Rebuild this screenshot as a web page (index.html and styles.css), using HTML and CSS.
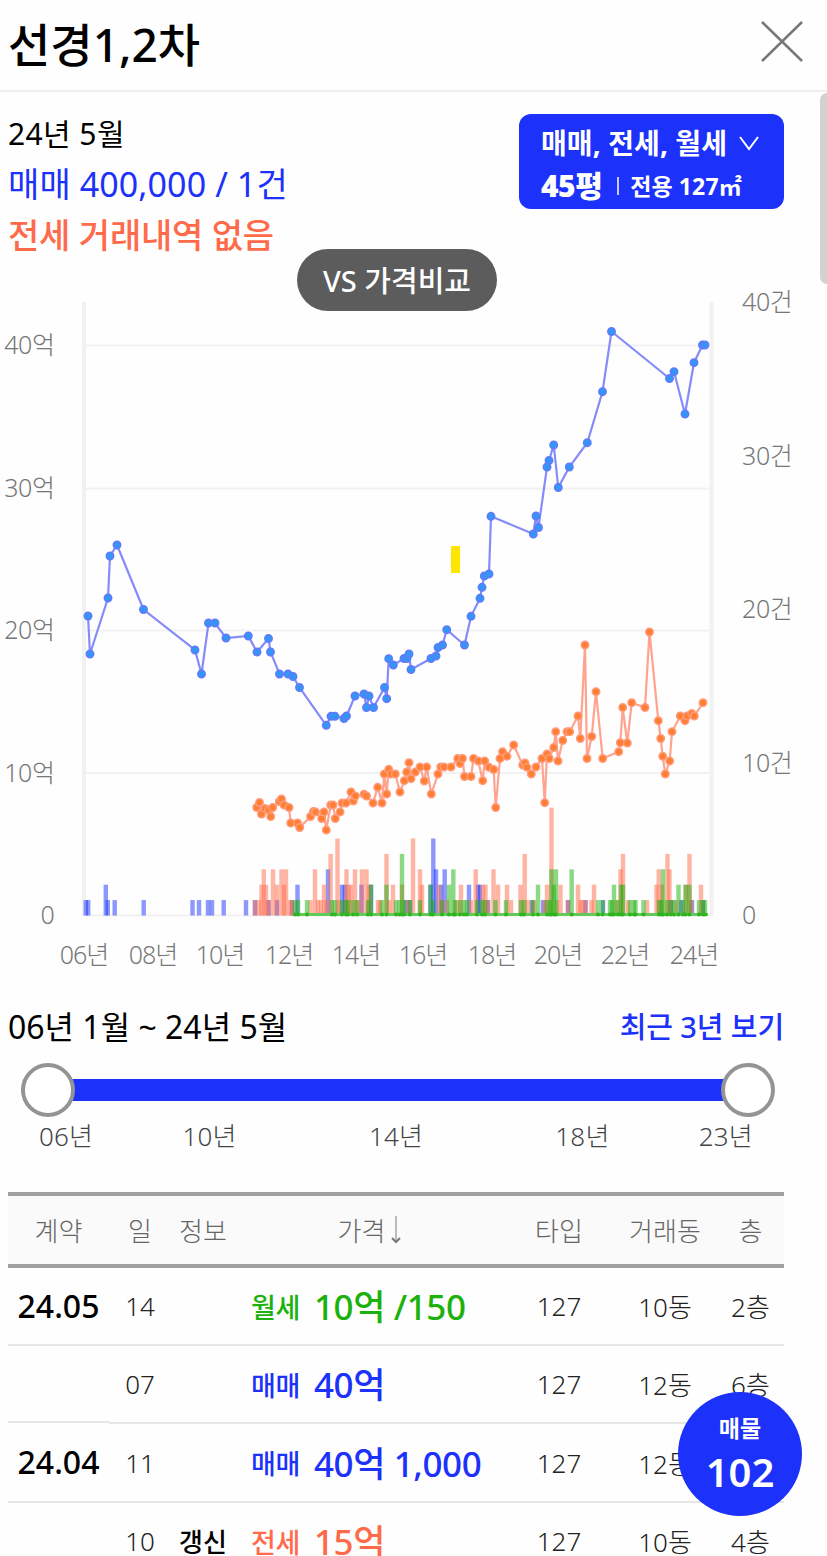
FILE: index.html
```html
<!DOCTYPE html>
<html lang="ko">
<head>
    <meta charset="UTF-8">
    <meta name="viewport" content="width=device-width, initial-scale=1.0">
    <title>선경1,2차</title>
    <link rel="stylesheet" href="styles.css">
</head>
<body>
    <header>
        <h1>선경1,2차</h1>
        <button class="btn-close" aria-label="닫기">
            <svg width="42" height="42" viewBox="0 0 42 42"><path d="M1 1L41 40M41 1L1 40"/></svg>
        </button>
    </header>
    <main>
        <section class="summary">
            <div class="summary-text">
                <p class="month">24년 5월</p>
                <p class="sale">매매 400,000 / 1건</p>
                <p class="lease">전세 거래내역 없음</p>
            </div>
            <button class="btn-filter">
                <span class="filter-type">매매, 전세, 월세
                    <svg width="20" height="15" viewBox="0 0 20 15"><path d="M1 1L10 13L19 1"/></svg>
                </span>
                <span class="filter-size"><b>45평</b><i></i><em>전용 127㎡</em></span>
            </button>
            <button class="btn-compare">VS 가격비교</button>
        </section>

        <svg class="chart" id="chart" width="827" height="710" viewBox="0 280 827 710"></svg>

        <section class="range">
            <div class="range-title">
                <span>06년 1월 ~ 24년 5월</span>
                <a class="recent">최근 3년 보기</a>
            </div>
            <div class="slider">
                <span class="thumb"></span>
                <span class="track"></span>
                <span class="thumb"></span>
            </div>
            <div class="range-years">
                <span>06년</span><span>10년</span><span>14년</span><span>18년</span><span>23년</span>
            </div>
        </section>

        <section class="deals">
            <div class="row head">
                <div>계약</div><div>일</div><div>정보</div>
                <div class="price-head">가격<svg width="12" height="30" viewBox="0 0 12 30"><path class="stem" d="M6 1V26"/><path d="M2 23L6 27L10 23"/></svg></div>
                <div>타입</div><div>거래동</div><div>층</div>
            </div>
            <div class="row">
                <div class="date">24.05</div><div>14</div><div></div>
                <div class="price rent"><small>월세</small>10억 /150</div>
                <div>127</div><div>10동</div><div>2층</div>
            </div>
            <div class="row">
                <div class="date short"></div><div>07</div><div></div>
                <div class="price sale"><small>매매</small>40억</div>
                <div>127</div><div>12동</div><div>6층</div>
            </div>
            <div class="row">
                <div class="date tall">24.04</div><div>11</div><div></div>
                <div class="price sale"><small>매매</small>40억 1,000</div>
                <div>127</div><div>12동</div><div></div>
            </div>
            <div class="row last">
                <div class="date"></div><div>10</div><div class="info">갱신</div>
                <div class="price lease"><small>전세</small>15억</div>
                <div>127</div><div>10동</div><div>4층</div>
            </div>
        </section>
    </main>
    <div class="scroll-thumb"></div>
    <button class="btn-listing"><span>매물</span><strong>102</strong></button>

    <script>
        const BASE = 915.5;   // 0억 / 0건
        const UNIT = 15.4;    // 1건 높이

        // 매매 가격
        const sale = "88,616 90,654 108,598 110,556 117,545 143.5,609.5 195,650 201.5,674 208.5,623 215,623 226,638 248.3,636 257,652 268.5,638.5 270.5,652 279.5,674 288,674 293,676.5 299.5,687.5 326.3,725.3 331,716.3 335,716.3 344,718.5 346.5,716 355,696 364,694 366.5,707.5 369,696 373.5,707.5 384.5,687.5 386.7,698.7 388.7,658.7 393.3,665 404,658.5 407,658.5 409,654 411,669.5 431,658.5 436,656 438,647.5 442.5,645 446.7,629.7 464.5,645 471,616.3 480,598.3 482,587.3 484.3,576 489,574 491,516.3 533.3,534 536,516 538.5,527.5 547,467 549,460.5 553.7,445 558.3,487.5 569.3,467 587.3,442.7 602.5,391.7 611.5,331.5 669.5,378.5 674,371.7 685,414 694,362.7 702.5,345 705,345";

        // 전세 가격
        const lease = "256.7,807.5 259.5,802.5 261.5,814 265,808.5 268.5,810 270.7,816.5 272.7,807.5 279.3,801.5 281.5,799 284,805 289,807.5 290.7,823 297.5,823 299.7,827.5 310.5,816.5 313.5,811.5 315.5,812 321.7,818.5 324,812 326.3,830 330.7,805 333,805 335.3,818.5 340,812 342,803 346,803 351,792 353.3,801 355.3,796 364,794.3 366.5,796 373,803 377.7,787.3 382,803 384.3,774 386.7,794 388.7,769.3 391,774 395.3,774 400,792 404.3,780.7 406.7,772 409,762.7 411,778.7 415.3,772 420,767 424.3,781 426.7,767 431.3,794 438,774 440.7,767 444,767 451,767 457.7,758.5 460,763.5 462.5,758.5 464.5,776.5 471,776.5 473.5,758.5 478.3,761 482.7,780.7 484.7,761 489,767.3 493.7,769.5 495.7,807.5 500,758.5 502.5,751.7 507,756.3 513.7,745 522.7,765 525,763 527,767.3 531.3,774 536,767 542,758.5 544.7,802.7 547,754 549.3,758.5 553.7,747.5 555.7,731.7 558,761 562.7,740.5 567,731.7 569.7,731.7 578,716 580.3,738.5 585,645 587,758.5 591.7,736.5 596,691.7 602.7,758.5 618.7,751.7 620.3,742.7 622.7,707.5 627.3,743 631.7,702.7 645,707.5 649.5,632 658.3,720.7 660.7,738.5 662.7,756.3 665.3,774 669.7,761 672,731.7 680.3,716 685,720.7 687,716 691.7,713.5 694.3,716 703,702.7";

        // 거래 건수 [위치, 건수]
        const bars = {
            sale: [[85.8,1],[88.2,1],[105.8,2],[107.8,1],[114.7,1],[143.7,1],[192.5,1],[199,1],[208,1],[212,1],[223.7,1],[246,1],[255,1],[268.5,1],[277,1],[292,1],[297.5,2],[328,3],[342,2],[345,2],[361.5,2],[371,2],[406,1],[410,1],[430.5,2],[433.3,5],[436,3],[441,2],[444.7,3],[469,2],[478,2],[480,2],[488,1],[532,1],[543,1],[568,1],[585.5,1],[603,1],[671,1],[681,1],[692,1],[703,1]],
            lease: [[255,1],[259,1],[261.5,2],[263.8,3],[266,2],[268.7,1],[273,3],[277,2],[281.5,3],[284,2],[286,3],[290,1],[292,1],[310.5,1],[315,3],[318,1],[321,1],[324,2],[326.3,1],[330.6,4],[337.5,5],[339,1],[346.5,3],[348.8,2],[351,2],[355,3],[358,1],[362,3],[366.5,3],[369,2],[378,1],[380,1],[386.5,4],[389,1],[393,2],[402,2],[408,1],[413,5],[420,3],[422,2],[439,2],[442,1],[447,1],[457,1],[461,2],[471,1],[475.7,3],[483,2],[485.5,2],[488,1],[493.5,3],[498,2],[507,2],[511,1],[520.5,2],[524.7,4],[528,1],[534,1],[545,1],[547,2],[551.5,7],[557,1],[560.5,2],[568,1],[578,2],[580.5,1],[582.5,1],[585.5,1],[591.5,1],[594,2],[616,1],[620.5,3],[623,4],[628,1],[647,1],[656.5,2],[658.7,3],[662,2],[667.5,4],[669.5,3],[676,1],[686,2],[689.5,4],[691,1],[701,2]],
            rent: [[295,1],[298,1],[307,1],[332,1],[335,1],[342,1],[346,1],[348,1],[353,1],[357,1],[368,1],[371,2],[382,1],[386.5,2],[396,1],[399.5,1],[402,4],[404,1],[410,1],[420,1],[430.5,2],[433,1],[442,1],[449,2],[453.3,3],[455,1],[460,1],[464,1],[467,1],[477,1],[482,1],[485,1],[495.5,1],[506,1],[521,1],[524,1],[533,1],[538,2],[547,1],[550,1],[551.5,3],[554,2],[556,3],[571.7,3],[598,1],[602.5,1],[610,1],[612,1],[614,2],[618,1],[621,2],[623,2],[630,1],[634,1],[635.5,1],[643.5,1],[659,1],[661.5,1],[663,3],[667,1],[671,1],[674,1],[678.5,2],[683,1],[685.5,2],[689.5,2],[699,1],[703,1],[705,1]]
        };

        let svg = "";

        // 축과 눈금선
        [345.5, 488.5, 630.5, 773, BASE].forEach((y, i) => {
            svg += `<line class="grid" x1="86" x2="709" y1="${y}" y2="${y}"/>`;
            const label = i === 4 ? "0" : `${40 - i * 10}억`;
            svg += `<text class="label label-y" x="54.5" y="${y + 8.5}" text-anchor="end">${label}</text>`;
        });
        svg += `<path class="axis" d="M84 302V916M711.5 302V916"/>`;
        [302, 456, 609, 763, BASE].forEach((y, i) => {
            const label = i === 4 ? "0" : `${40 - i * 10}건`;
            svg += `<text class="label label-y" x="742" y="${y + 8.5}">${label}</text>`;
        });
        [84, 153, 220, 289, 356, 423, 492, 558, 625, 694].forEach((x, i) => {
            const year = String(6 + i * 2).padStart(2, "0");
            svg += `<text class="label" x="${x}" y="964" text-anchor="middle">${year}년</text>`;
        });

        // 막대
        ["sale", "lease", "rent"].forEach(kind => {
            bars[kind].forEach(([x, n]) => {
                svg += `<rect class="bar-${kind}" x="${x - 2.2}" y="${BASE - n * UNIT}" width="4.4" height="${n * UNIT}"/>`;
            });
        });
        svg += `<path class="rent-line" d="M294 914.5H708"/>`;
        bars.rent.forEach(([x]) => {
            svg += `<circle class="dot-rent" cx="${x}" cy="914.5" r="2"/>`;
        });

        // 가격 선
        [["lease", lease], ["sale", sale]].forEach(([kind, points]) => {
            svg += `<polyline class="line-${kind}" points="${points}"/>`;
            points.split(" ").forEach(p => {
                const [x, y] = p.split(",");
                svg += `<circle class="dot-${kind}" cx="${x}" cy="${y}" r="3.7"/>`;
            });
        });
        svg += `<rect class="marker" x="451" y="546" width="9" height="27"/>`;

        document.getElementById("chart").innerHTML = svg;
    </script>
</body>
</html>
```
FILE: styles.css
```css
* {
    box-sizing: border-box;
}

html {
    height: 1556px;
    overflow: hidden;
}

body {
    font-family: "Noto Sans", "Noto Sans CJK KR", sans-serif;
    margin: 0;
    height: 1556px;
    overflow: hidden;
    background-color: #fefefe;
    color: #000;
    position: relative;
}

button {
    font-family: inherit;
    border: none;
    cursor: pointer;
}

p {
    margin: 0;
}

header {
    height: 92px;
    padding: 0 24px 6px 8px;
    border-bottom: 2px solid #eee;
    display: flex;
    justify-content: space-between;
    align-items: center;
}

h1 {
    margin: 0;
    font-size: 46px;
    font-weight: 500;
    letter-spacing: 0;
}

.btn-close {
    width: 42px;
    height: 42px;
    padding: 0;
    background: none;
}

.btn-close path {
    stroke: #777;
    stroke-width: 2.5;
    fill: none;
}

.summary {
    height: 188px;
    padding: 17px 43px 0 8px;
    display: flex;
    justify-content: space-between;
    align-items: flex-start;
    position: relative;
}

.summary-text {
    font-size: 34px;
    line-height: 51px;
    letter-spacing: 0.1px;
    white-space: nowrap;
}

.summary-text .month {
    font-size: 30px;
    line-height: 50px;
    letter-spacing: 0.4px;
}

.summary-text .lease {
    font-weight: 500;
    letter-spacing: -0.2px;
}

.sale {
    color: #1c31fa;
}

.lease {
    color: #ff6b4a;
}

.rent {
    color: #1cb10c;
}

.btn-filter {
    width: 265px;
    height: 95px;
    margin-top: 5px;
    padding: 6px 0 0 22px;
    border-radius: 12px;
    background-color: #1c31fa;
    color: #fff;
    text-align: left;
    font-weight: 700;
    white-space: nowrap;
}

.filter-type {
    display: flex;
    align-items: center;
    gap: 12px;
    font-size: 28px;
    line-height: 43px;
    letter-spacing: 0.1px;
}

.filter-type path {
    stroke: #fff;
    stroke-width: 2;
    fill: none;
}

.filter-size {
    display: flex;
    align-items: center;
    font-size: 30px;
    line-height: 42px;
    letter-spacing: -0.5px;
}

.filter-size i {
    width: 2px;
    height: 18px;
    margin: 0 11px 0 15px;
    background-color: #c5caff;
}

.filter-size em {
    font-style: normal;
    font-size: 23px;
    letter-spacing: 0.1px;
}

.btn-compare {
    position: absolute;
    left: 297px;
    top: 157px;
    width: 200px;
    height: 62px;
    border-radius: 31px;
    background-color: #5c5c5c;
    color: #fff;
    font-size: 29px;
    font-weight: 500;
    padding: 0 0 2px;
    z-index: 1;
}

.chart {
    display: block;
}

.label {
    font-size: 25px;
    font-weight: 300;
    fill: #777;
    letter-spacing: -1px;
}

.label-y {
    letter-spacing: -0.4px;
}

.grid {
    stroke: #f1f1f1;
    stroke-width: 2;
}

.axis {
    stroke: #f1f1f1;
    stroke-width: 4;
}

.bar-sale {
    fill: rgba(28, 49, 250, 0.5);
}

.bar-lease {
    fill: rgba(255, 107, 74, 0.5);
}

.bar-rent {
    fill: rgba(28, 177, 12, 0.5);
}

.rent-line {
    stroke: #62ca58;
    stroke-width: 3;
}

.dot-rent {
    fill: #2db41e;
}

.line-sale,
.line-lease {
    fill: none;
    stroke-width: 2.2;
}

.line-sale {
    stroke: #858cf9;
}

.line-lease {
    stroke: #ffa38f;
}

.dot-sale {
    fill: #3296f5;
    stroke: #6479f9;
    stroke-width: 1.5;
}

.dot-lease {
    fill: #ff7f32;
    stroke: #ff9a7c;
    stroke-width: 1.5;
}

.marker {
    fill: #ffe600;
}

.range {
    height: 202px;
    padding: 12px 43px 0 8px;
}

.range-title {
    display: flex;
    justify-content: space-between;
    font-size: 32px;
    line-height: 49px;
    letter-spacing: 0;
}

.recent {
    font-size: 29px;
    font-weight: 500;
    letter-spacing: -0.1px;
    color: #1c31fa;
}

.slider {
    display: flex;
    align-items: center;
    height: 54px;
    margin: 12px 9px 0 13px;
}

.thumb {
    width: 54px;
    height: 54px;
    border: 4px solid #949494;
    border-radius: 50%;
    background-color: #fff;
    z-index: 1;
}

.track {
    flex: 1;
    height: 22px;
    margin: 0 -4px;
    background-color: #1c31fa;
}

.range-years {
    display: flex;
    justify-content: space-between;
    padding: 0 31px;
    font-size: 26px;
    font-weight: 300;
    line-height: 38px;
    letter-spacing: 0.2px;
    color: #444;
}

.range-years span:nth-child(3) {
    margin: 0 43px;
}

.deals {
    width: 776px;
    margin-left: 8px;
}

.row {
    display: grid;
    grid-template-columns: 101px 62px 64px 270px 108px 104px 67px;
    height: 78px;
    font-size: 26px;
    font-weight: 300;
    color: #222;
}

.row > div {
    display: flex;
    align-items: center;
    justify-content: center;
    border-bottom: 2px solid #e6e6e6;
    white-space: nowrap;
}

.row.head {
    height: 76px;
    border-top: 4px solid #a0a0a0;
    border-bottom: 4px solid #a0a0a0;
    background-color: #fafafa;
    color: #666;
}

.row.head > div,
.row.last > div {
    border: none;
}

.price-head svg {
    margin-left: 5px;
}

.price-head path {
    stroke: #777;
    stroke-width: 2;
    fill: none;
}

.price-head .stem {
    stroke: #bbb;
}

.row .date {
    font-size: 32px;
    font-weight: 500;
    color: #000;
    padding-bottom: 2px;
}

.row .short {
    height: 77px;
}

.row .tall {
    height: 79px;
}

.row .info {
    font-weight: 500;
    color: #000;
}

.row .price {
    justify-content: flex-start;
    padding: 0 0 3px 16px;
    font-size: 35px;
    font-weight: 500;
    letter-spacing: -0.4px;
}

.price small {
    font-size: 27px;
    margin: 3px 14px 0 0;
}

.price.rent {
    color: #1cb10c;
}

.price.sale {
    color: #1c31fa;
}

.price.lease {
    color: #ff6b4a;
}

.scroll-thumb {
    position: absolute;
    left: 820px;
    top: 93px;
    width: 14px;
    height: 191px;
    border-radius: 7px;
    background-color: #d2d2d2;
}

.btn-listing {
    position: absolute;
    left: 678px;
    top: 1392px;
    width: 124px;
    height: 124px;
    padding: 0 0 4px;
    border-radius: 50%;
    background-color: #1c31fa;
    color: #fff;
    display: flex;
    flex-direction: column;
    align-items: center;
    justify-content: center;
    z-index: 1;
}

.btn-listing span {
    font-size: 23px;
    font-weight: 700;
    line-height: 40px;
}

.btn-listing strong {
    font-size: 40px;
    font-weight: 600;
    line-height: 48px;
}
```
